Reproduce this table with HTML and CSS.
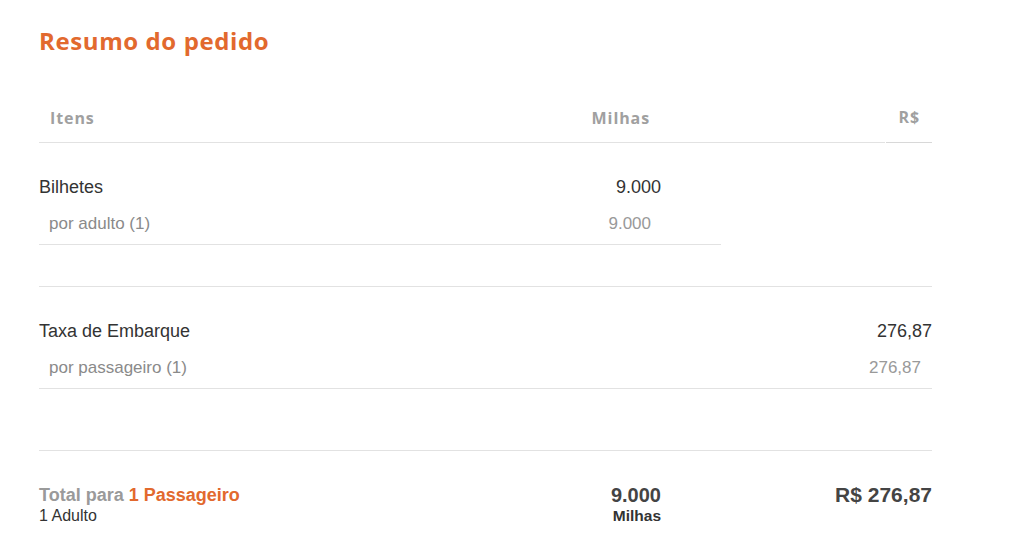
FILE: index.html
```html
<!DOCTYPE html>
<html lang="pt">
<head>
<meta charset="utf-8">
<link rel="stylesheet" href="styles.css">
</head>
<body>
<div class="summary">
  <h1 class="title">Resumo do pedido</h1>
  <div class="head">
    <div class="head-main">
      <span class="h-itens">Itens</span>
      <span class="h-milhas">Milhas</span>
    </div>
    <div class="head-rs">R$</div>
  </div>

  <div class="section">
    <div class="row main">
      <span class="name">Bilhetes</span>
      <span class="mil">9.000</span>
      <span class="rs"></span>
    </div>
    <div class="row sub short">
      <span class="name">por adulto (1)</span>
      <span class="mil">9.000</span>
    </div>
  </div>

  <div class="section second">
    <div class="row main">
      <span class="name">Taxa de Embarque</span>
      <span class="mil"></span>
      <span class="rs">276,87</span>
    </div>
    <div class="row sub full">
      <span class="name">por passageiro (1)</span>
      <span class="mil"></span>
      <span class="rs">276,87</span>
    </div>
  </div>

  <div class="total">
    <div class="t-name">
      <div class="t-line"><span class="gray">Total para</span> <span class="orange">1 Passageiro</span></div>
      <div class="t-sub">1 Adulto</div>
    </div>
    <div class="t-mil">
      <div class="big">9.000</div>
      <div class="small">Milhas</div>
    </div>
    <div class="t-rs">
      <div class="big">R$ 276,87</div>
    </div>
  </div>
</div>
</body>
</html>
```

FILE: styles.css
```css
* { box-sizing: border-box; }
body {
  margin: 0;
  background: #fff;
  font-family: "Liberation Sans", Arial, sans-serif;
  color: #333;
}
.summary {
  width: 893px;
  margin-left: 39px;
  padding-top: 26px;
}
.title {
  margin: 0;
  font-family: "Open Sans", sans-serif;
  font-weight: 700;
  font-size: 24px;
  line-height: 30px;
  color: #e2692e;
  letter-spacing: 0.6px;
}
.head {
  display: flex;
  margin-top: 51px;
  font-family: "Open Sans", sans-serif;
  font-weight: 700;
  font-size: 16px;
  color: #a0a0a0;
  letter-spacing: 0.9px;
}
.head-main {
  flex: 1;
  display: flex;
  justify-content: space-between;
  padding: 0 235px 13px 11px;
  border-bottom: 1px solid #e2e2e2;
  line-height: 22px;
}
.head-rs {
  width: 46px;
  margin-left: 1px;
  text-align: right;
  padding: 0 12px 13px 0;
  line-height: 20px;
  border-bottom: 1px solid #d8d8d8;
}
.h-itens, .h-milhas { display: block; }
.section {
  border-bottom: 1px solid #e2e2e2;
  padding-top: 32px;
  padding-bottom: 41px;
}
.section.second { padding-bottom: 61px; }
.row {
  display: grid;
  grid-template-columns: 1fr 210px 211px;
  align-items: center;
}
.row.main {
  font-size: 18px;
  line-height: 24px;
  color: #333;
}
.row.main .mil { text-align: right; padding-right: 60px; }
.row.main .rs { text-align: right; }
.row.sub {
  margin-top: 14px;
  padding-bottom: 9px;
  font-size: 17px;
  line-height: 22px;
  color: #8a8a8a;
  border-bottom: 1px solid #e2e2e2;
}
.row.sub .name { padding-left: 10px; }
.row.sub .mil { text-align: right; padding-right: 70px; color: #999; }
.row.sub .rs { text-align: right; padding-right: 11px; color: #999; }
.row.sub.short {
  grid-template-columns: 1fr 210px;
  width: 682px;
}
.total {
  display: grid;
  grid-template-columns: 1fr 210px 211px;
  padding-top: 32px;
}
.t-line {
  font-weight: 700;
  font-size: 18px;
  line-height: 24px;
}
.gray { color: #9a9a9a; }
.orange { color: #e2692e; }
.t-sub { font-size: 16px; line-height: 18px; color: #333; }
.t-mil { text-align: right; padding-right: 60px; }
.t-rs { text-align: right; }
.big {
  font-weight: 700;
  font-size: 20px;
  line-height: 24px;
  color: #444;
}
.t-rs .big { font-size: 21px; }
.small {
  font-weight: 700;
  font-size: 15.5px;
  line-height: 18px;
  color: #333;
}
```
